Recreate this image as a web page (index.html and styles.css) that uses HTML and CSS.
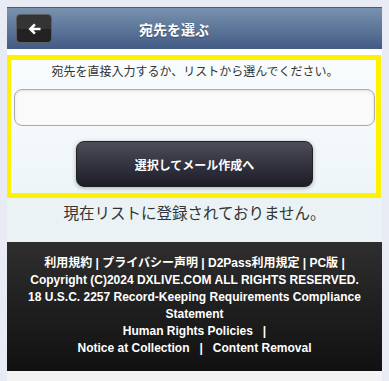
FILE: index.html
```html
<!DOCTYPE html>
<html lang="ja">
<head>
    <meta charset="UTF-8">
    <meta name="viewport" content="width=device-width, initial-scale=1.0">
    <title>宛先を選ぶ</title>
    <link rel="stylesheet" href="styles.css">
</head>
<body>
    <div class="page">
        <div class="header">
            <a class="back-btn" href="#">
                <svg width="13" height="12" viewBox="0 0 13 12">
                    <path d="M6 0.5 L0.5 6 L6 11.5 L7.8 9.7 L5.4 7.3 L12.5 7.3 L12.5 4.7 L5.4 4.7 L7.8 2.3 Z" fill="#fff"/>
                </svg>
            </a>
            <h1 class="title">宛先を選ぶ</h1>
        </div>

        <div class="main">
            <div class="select-box">
                <p class="lead">宛先を直接入力するか、リストから選んでください。</p>
                <input type="text" class="address-input">
                <button class="submit-btn">選択してメール作成へ</button>
            </div>
            <p class="empty">現在リストに登録されておりません。</p>
        </div>

        <div class="footer">
            <p>利用規約 | プライバシー声明 | D2Pass利用規定 | PC版 |</p>
            <p>Copyright (C)2024 DXLIVE.COM ALL RIGHTS RESERVED.</p>
            <p>18 U.S.C. 2257 Record-Keeping Requirements Compliance Statement</p>
            <p>Human Rights Policies &nbsp; |</p>
            <p>Notice at Collection &nbsp; | &nbsp; Content Removal</p>
        </div>
    </div>
</body>
</html>
```

FILE: styles.css
```css
body {
    margin: 7px 7px 0;
    background-color: #e8ebf3;
    font-family: "Liberation Sans", "Noto Sans CJK JP", sans-serif;
}
.page {
    width: 375px;
    background: #f3f3f3;
    border-right: 1px solid #d8dbe2;
    min-height: 380px;
}
.header {
    display: flex;
    align-items: center;
    height: 41px;
    padding-left: 9px;
    border-top: 1px solid #5a5a5a;
    background: linear-gradient(#7892ae, #435b85);
}
.back-btn {
    display: flex;
    align-items: center;
    justify-content: center;
    width: 34px;
    height: 27px;
    border: 1px solid #5e5e5e;
    border-radius: 4px;
    background: linear-gradient(#343434 50%, #222 50%);
}
.title {
    margin: 0 0 0 87px;
    font-size: 14px;
    font-weight: bold;
    color: #fff;
    text-shadow: 0 1px 1px rgba(0,0,0,0.3);
}
.main {
    padding-top: 6px;
    background: linear-gradient(#ffffff, #eaf2f6 60%);
}
.select-box {
    margin: 0 1px 0 -1px;
    padding: 3px 0 6px 3px;
    border: 5px solid #fff200;
    background: linear-gradient(#f9fcfd, #eef5f8);
}
.lead {
    margin: 0;
    font-size: 12px;
    line-height: 18px;
    color: #333;
    text-align: center;
}
.address-input {
    display: block;
    box-sizing: border-box;
    width: 361px;
    height: 37px;
    margin-top: 8px;
    border: 1px solid #aaa;
    border-radius: 8px;
    background: #fafafa;
    box-shadow: inset 0 1px 3px rgba(0,0,0,0.1);
}
.submit-btn {
    display: block;
    width: 237px;
    height: 46px;
    margin: 15px 0 0 62px;
    border: 1px solid #222;
    border-radius: 8px;
    background: linear-gradient(#4c4c5a, #1d1d28);
    color: #fff;
    font-family: "Liberation Sans", "Noto Sans CJK JP", sans-serif;
    font-size: 12px;
    font-weight: bold;
    box-shadow: 0 1px 4px rgba(0,0,0,0.3);
}
.empty {
    margin: 0;
    padding: 5px 0 17px;
    font-size: 15.5px;
    line-height: 22px;
    color: #333;
    text-align: center;
}
.footer {
    padding: 13px 10px 14px;
    background: linear-gradient(#2e2e2e, #111);
    color: #fff;
    text-align: center;
    font-size: 12px;
    font-weight: bold;
    line-height: 17px;
}
.footer p {
    margin: 0;
}
```
